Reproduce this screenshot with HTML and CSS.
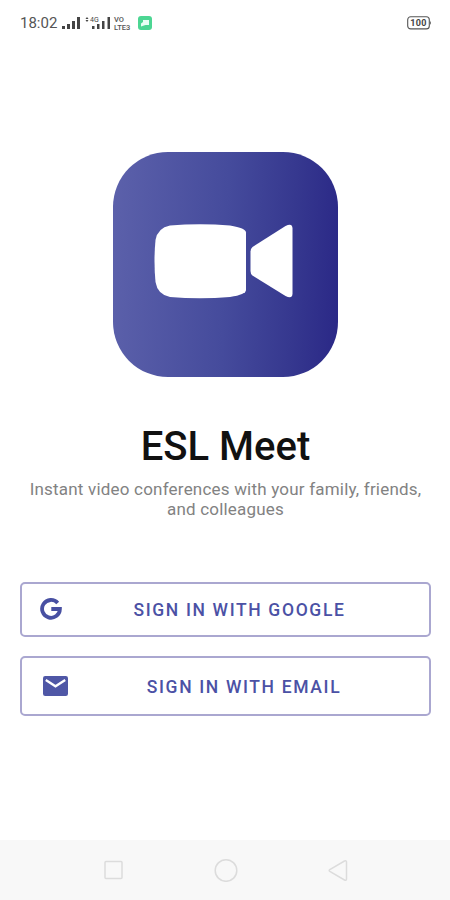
FILE: index.html
```html
<!DOCTYPE html>
<html lang="en">
  <head>
    <meta charset="utf-8">
    <meta name="viewport" content="width=device-width, initial-scale=1">
    <title>ESL Meet</title>
    <link rel="stylesheet" href="styles.css">
  </head>
  <body>
    <div class="screen">
      <header class="status">
        <span class="clock">18:02</span>
        <svg class="signal" width="19" height="14" viewBox="0 0 19 14">
          <path d="M1 10h3v3H1zM6 8h3v5H6zM11 5h3v8h-3zM16 1h3v12h-3z"/>
        </svg>
        <svg class="signal signal-4g" width="25" height="14" viewBox="0 0 25 14">
          <path d="M2 1l1.500 2h-3zM2 6L.5 4h3zM7 10h2.500v3H7zM12 8h2.500v5H12zM17 5h2.500v8H17zM22.500 1H25v12h-2.500z"/>
          <text x="5" y="6">4G</text>
        </svg>
        <span class="volte"><span>VO</span><span>LTE3</span></span>
        <svg class="app" width="14" height="14" viewBox="0 0 14 14">
          <rect width="14" height="14" rx="3" fill="#4cd693"/>
          <path d="M3 10.500V7.500L5 6V4h6v5H7.500z" fill="#e9fff4"/>
        </svg>
        <svg class="battery" width="25" height="14" viewBox="0 0 25 14">
          <rect x=".7" y=".7" width="21.600" height="12.200" rx="3" fill="#fff" stroke="#555" stroke-width="1.100"/>
          <path d="M23 4.500q1.800 2.300 0 4.600z" fill="#555"/>
          <text x="11.500" y="10" text-anchor="middle">100</text>
        </svg>
      </header>

      <main class="content">
        <svg class="logo" width="225" height="225" viewBox="0 0 225 225">
          <defs>
            <linearGradient id="logo-fill" x1="0" y1="0.480" x2="1" y2="0.520">
              <stop offset="0" stop-color="#5b60aa"/>
              <stop offset=".5" stop-color="#454b9c"/>
              <stop offset=".8" stop-color="#36388f"/>
              <stop offset="1" stop-color="#2b2987"/>
            </linearGradient>
          </defs>
          <rect width="225" height="225" rx="55" fill="url(#logo-fill)"/>
          <path fill="#fff" d="M57 73.500Q87 71 117 73.500Q133 76 133 80.500V138Q133 142.500 117 145Q87 147.500 57 145Q44.500 142.500 42.500 130Q40.500 109 42.500 88Q44.500 76 57 73.500Z"/>
          <path fill="#fff" d="M139.500 95L172.500 74Q179.500 70.500 179.500 76.500V141.500Q179.500 147.500 172.500 144L139.500 123.500Q137.500 122 137.500 119V99.500Q137.500 96.500 139.500 95Z"/>
        </svg>
        <h1 class="title">ESL Meet</h1>
        <p class="tagline">Instant video conferences with your family, friends,<br>and colleagues</p>

        <div class="buttons">
          <button class="button google">
            <svg class="icon" width="22" height="22" viewBox="0 0 22 22">
              <path d="M17.700 5A8.900 8.900 0 1 0 19.900 11H11.300" fill="none" stroke="#4850a2" stroke-width="3.800"/>
            </svg>
            <span class="label">SIGN IN WITH GOOGLE</span>
          </button>
          <button class="button email">
            <svg class="icon" width="25" height="20" viewBox="0 0 25 20">
              <rect width="25" height="20" rx="2.200" fill="#4f57a6"/>
              <path d="M2.800 4L12.500 10.300L22.200 4" fill="none" stroke="#fff" stroke-width="2.300"/>
            </svg>
            <span class="label">SIGN IN WITH EMAIL</span>
          </button>
        </div>
      </main>

      <nav class="nav">
        <svg width="24" height="24" viewBox="0 0 24 24"><rect x="3" y="3.500" width="17" height="17" rx="1"/></svg>
        <svg width="24" height="24" viewBox="0 0 24 24"><circle cx="12" cy="12.500" r="10.800"/></svg>
        <svg width="24" height="24" viewBox="0 0 24 24"><path d="M3.800 11.500Q2.500 12.500 3.800 13.500L18.500 22Q20.500 22.800 20.500 21V4Q20.500 2.200 18.500 3Z"/></svg>
      </nav>
    </div>
  </body>
</html>
```

FILE: styles.css
```css
* {
  box-sizing: border-box;
}

body {
  margin: 0;
  background: #fff;
  font-family: Roboto, sans-serif;
}

.screen {
  display: flex;
  flex-direction: column;
  height: 900px;
}

/* status bar */
.status {
  display: flex;
  align-items: center;
  height: 46px;
  padding: 0 18px 0 20px;
  color: #555;
}

.clock {
  width: 41px;
  font-size: 15px;
  line-height: 18px;
}

.signal {
  fill: #444;
}

.signal-4g {
  margin-left: 5px;
}

.signal-4g text {
  font-size: 7px;
}

.volte {
  display: flex;
  flex-direction: column;
  gap: 1px;
  width: 20px;
  margin-left: 4px;
  font-size: 7.5px;
  font-weight: 500;
  line-height: 7px;
}

.app {
  margin-left: 4px;
}

.battery {
  margin-left: auto;
}

.battery text {
  fill: #444;
  font-size: 9px;
  font-weight: 700;
  letter-spacing: 0.4px;
}

/* sign in */
.content {
  display: flex;
  flex: 1;
  flex-direction: column;
  align-items: center;
  padding: 106px 19px 0 20px;
}

.title {
  margin: 47px 0 0;
  color: #111;
  font-size: 40px;
  font-weight: 500;
  line-height: 46px;
}

.tagline {
  margin: 9px 0 0;
  color: #828282;
  font-size: 17px;
  line-height: 20px;
  letter-spacing: 0.2px;
  text-align: center;
  white-space: nowrap;
}

.buttons {
  display: flex;
  flex-direction: column;
  gap: 19px;
  width: 100%;
  margin-top: 63px;
}

.button {
  display: flex;
  align-items: center;
  height: 55px;
  padding: 0 12px 0 18px;
  border: 2px solid #aaa7d0;
  border-radius: 5px;
  background: #fff;
  color: #4b51a5;
  font-family: inherit;
  font-size: 17.5px;
  font-weight: 500;
  letter-spacing: 1.65px;
}

.email {
  height: 60px;
  padding: 0 9px 0 21px;
}

.label {
  flex: 1;
  padding-top: 1px;
  text-align: center;
}

.google .icon {
  margin-bottom: 1px;
}

/* system navigation */
.nav {
  display: flex;
  align-items: center;
  justify-content: center;
  gap: 88px;
  height: 60px;
  padding-left: 1px;
  background: #f8f8f8;
}

.nav svg {
  fill: none;
  stroke: #dcdcdc;
  stroke-width: 1.5;
}
```
